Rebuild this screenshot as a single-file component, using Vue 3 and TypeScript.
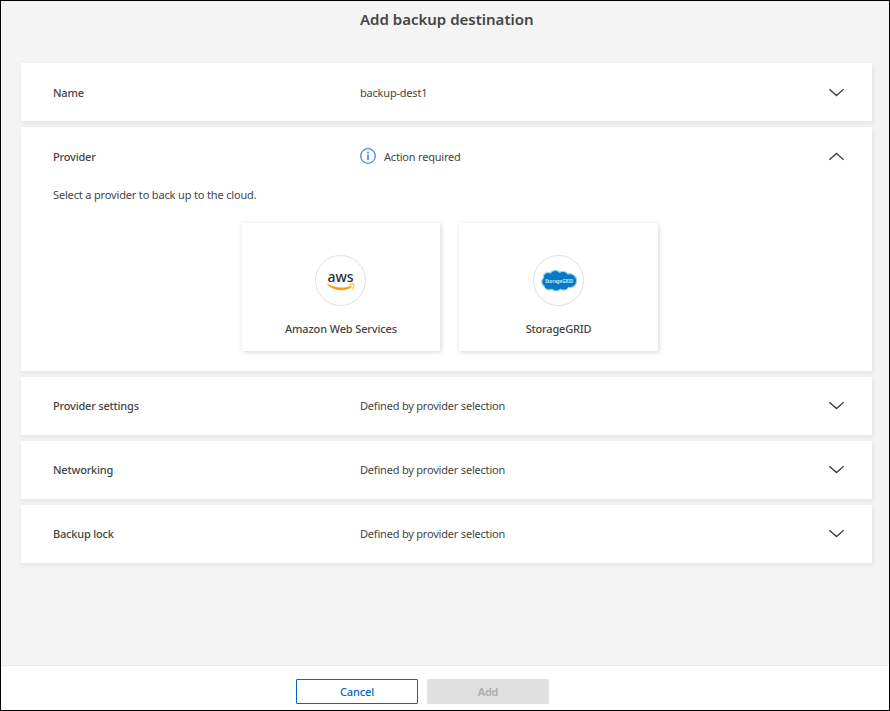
<script setup lang="ts">
interface Section {
  title: string
  value: string
  open?: boolean
  pending?: boolean
}

const sections: Section[] = [
  { title: 'Name', value: 'backup-dest1' },
  { title: 'Provider', value: 'Action required', open: true },
  { title: 'Provider settings', value: 'Defined by provider selection', pending: true },
  { title: 'Networking', value: 'Defined by provider selection', pending: true },
  { title: 'Backup lock', value: 'Defined by provider selection', pending: true },
]
</script>

<template>
  <div class="page">
    <h1 class="title">Add backup destination</h1>
    <main class="sections">
      <section v-for="s in sections" :key="s.title" class="panel" :class="{ open: s.open, pending: s.pending }">
        <header class="row">
          <span class="label">{{ s.title }}</span>
          <span class="value">
            <svg v-if="s.open" class="info" width="16" height="16" viewBox="0 0 16 16">
              <circle cx="8" cy="8" r="7.3" fill="none" stroke="#4b86ea" stroke-width="1.3" />
              <path d="M8 6.4V12" stroke="#4b86ea" stroke-width="1.7" />
              <circle cx="8" cy="4.5" r="1" fill="#4b86ea" />
            </svg>
            <span>{{ s.value }}</span>
          </span>
          <svg class="chevron" width="16" height="10" viewBox="0 0 16 10">
            <path :d="s.open ? 'M1.3 8.8L8.5 2.4L15.7 8.8' : 'M1.3 2.2L8.5 8.6L15.7 2.2'" fill="none" stroke="#404040" stroke-width="1.4" />
          </svg>
        </header>
        <div v-if="s.open" class="body">
          <p class="hint">Select a provider to back up to the cloud.</p>
          <div class="cards">
            <button class="card aws">
              <svg width="51" height="51" viewBox="0 0 51 51">
                <circle cx="25.5" cy="25.5" r="25" fill="#fff" stroke="#e0e0e0" />
                <text class="aws-word" x="12.4" y="27.2" textLength="26.2" lengthAdjust="spacingAndGlyphs">aws</text>
                <path d="M12.2 29.4C19 35.8 29.5 36.5 36.6 32L36.1 31C29 34 19.5 33.2 12.6 29Z" fill="#ff9900" stroke="#ff9900" stroke-width="0.4" />
                <path d="M34.2 29.6C36 28.7 38.6 28.7 39.1 29.2C39.4 30.6 38.6 32.6 37.3 33.8" fill="none" stroke="#ff9900" stroke-width="0.9" />
              </svg>
              <span>Amazon Web Services</span>
            </button>
            <button class="card grid">
              <svg width="51" height="51" viewBox="0 0 51 51">
                <circle cx="25.5" cy="25.5" r="25" fill="#fff" stroke="#dedede" />
                <path
                  d="M10.6 22.6C9.4 18.7 14.2 16.2 17.4 18.1C19 14.8 24.2 14.6 26.6 17.2C29.2 15.8 33.1 16.2 34.7 19.1C38.6 17.7 43.6 20.6 43.6 25.7C43.6 30.8 39.5 33.2 35.8 32.2C33.9 35.2 30 35.9 27.5 34.1C25 36.6 20.9 36.5 18.8 34.2C15 35.8 11.2 34.1 11.1 31.1C8.1 29.4 7.9 25.1 10.6 22.6Z"
                  fill="#0879c4" stroke="#9bd1ea" stroke-width="1.1"
                />
                <text class="grid-word" x="12.2" y="27.8" textLength="28" lengthAdjust="spacingAndGlyphs">StorageGRID</text>
              </svg>
              <span>StorageGRID</span>
            </button>
          </div>
        </div>
      </section>
    </main>
    <footer class="footer">
      <button class="btn cancel">Cancel</button>
      <button class="btn add" disabled>Add</button>
    </footer>
  </div>
</template>

<style>
body {
  margin: 0;
}
</style>

<style scoped>
.page {
  box-sizing: border-box;
  width: 890px;
  height: 711px;
  display: flex;
  flex-direction: column;
  border: 1px solid #000;
  background: #f4f4f4;
  color: #454545;
  font-family: "Noto Sans", "Open Sans", sans-serif;
  font-size: 11px;
  line-height: 16px;
  overflow: hidden;
}
.title {
  margin: 7px 0 0;
  padding-left: 359px;
  height: 55px;
  font-size: 15px;
  font-weight: 600;
  line-height: 22px;
  white-space: nowrap;
}
.sections {
  flex: 1;
  display: flex;
  flex-direction: column;
  gap: 6px;
  margin: 0 17px 0 20px;
}
.panel {
  height: 58px;
  background: #fff;
  box-shadow: 1px 2px 5px rgba(0, 0, 0, 0.08);
}
.panel.open {
  height: 244px;
}
.row {
  height: 58px;
  padding: 1px 28px 0 32px;
  box-sizing: border-box;
  display: flex;
  align-items: center;
}
.pending .row {
  padding-top: 0;
  padding-bottom: 1px;
}
.label {
  width: 307px;
  font-weight: 500;
  letter-spacing: -0.2px;
}
.value {
  flex: 1;
  display: flex;
  align-items: center;
  gap: 8px;
  letter-spacing: -0.2px;
}
.info {
  margin-top: -1px;
}
.chevron {
  margin-top: -1px;
}
.body {
  padding-top: 2px;
}
.hint {
  margin: 0 0 0 32px;
  letter-spacing: -0.16px;
}
.cards {
  display: flex;
  gap: 19px;
  padding: 20px 0 0 221px;
}
.card {
  box-sizing: border-box;
  width: 198px;
  height: 128px;
  padding: 32px 0 0;
  border: 0;
  background: #fff;
  box-shadow: 1px 1px 5px rgba(0, 0, 0, 0.16);
  display: flex;
  flex-direction: column;
  align-items: center;
  gap: 15px;
  font: 500 11px/16px "Noto Sans", "Open Sans", sans-serif;
  letter-spacing: -0.14px;
  color: #454545;
}
.card.aws svg {
  margin-right: 1px;
}
.card.grid {
  width: 199px;
  letter-spacing: -0.2px;
}
.aws-word {
  font: 500 15px "Noto Sans", sans-serif;
  letter-spacing: 0;
  fill: #252f3e;
}
.grid-word {
  font: 700 5px "Noto Sans", sans-serif;
  letter-spacing: 0;
  fill: #c9e5f5;
}
.footer {
  height: 45px;
  box-sizing: border-box;
  padding: 13px 0 0 295px;
  display: flex;
  gap: 9px;
  background: #fff;
  border-top: 1px solid #ececec;
}
.btn {
  box-sizing: border-box;
  width: 122px;
  height: 25px;
  padding: 0;
  border: 1px solid #0067c5;
  border-radius: 1px;
  background: #fff;
  color: #0067c5;
  font: 500 11px/23px "Noto Sans", "Open Sans", sans-serif;
  letter-spacing: -0.15px;
}
.add {
  border-color: #e0e0e0;
  background: #e0e0e0;
  color: #adadad;
  font-weight: 600;
}
</style>
